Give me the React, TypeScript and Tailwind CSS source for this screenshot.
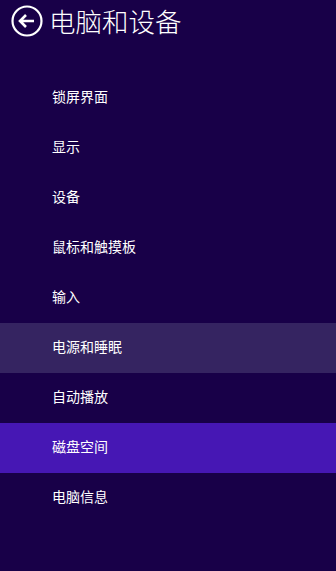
import clsx from "clsx";

const items = [
  "锁屏界面",
  "显示",
  "设备",
  "鼠标和触摸板",
  "输入",
  "电源和睡眠",
  "自动播放",
  "磁盘空间",
  "电脑信息",
];

const HOVER = 5;
const SELECTED = 7;

function BackButton() {
  return (
    <svg width="32" height="32" viewBox="0 0 32 32" className="shrink-0">
      <circle cx="16" cy="16" r="14.5" fill="none" stroke="white" strokeWidth="2.2" />
      <path
        d="M9 16 H23 M15 10 L9 16 L15 22"
        fill="none"
        stroke="white"
        strokeWidth="2.6"
        strokeLinecap="butt"
        strokeLinejoin="miter"
      />
    </svg>
  );
}

export default function App() {
  return (
    <div
      className="w-[336px] h-[571px] bg-[#180048] text-white overflow-hidden"
      style={{ fontFamily: '"Microsoft YaHei", "Noto Sans CJK SC", sans-serif' }}
    >
      <div className="flex items-center h-[44px] pl-[11px] gap-[6px] pb-[2px]">
        <BackButton />
        <h1 className="text-[26.5px] leading-none font-light">电脑和设备</h1>
      </div>
      <ul className="mt-[29px]">
        {items.map((label, i) => (
          <li
            key={label}
            className={clsx("h-[50px] flex items-center pl-[52px] pb-[3px] text-[14px]", {
              "bg-[#352461]": i === HOVER,
              "bg-[#4617b4]": i === SELECTED,
            })}
          >
            {label}
          </li>
        ))}
      </ul>
    </div>
  );
}
